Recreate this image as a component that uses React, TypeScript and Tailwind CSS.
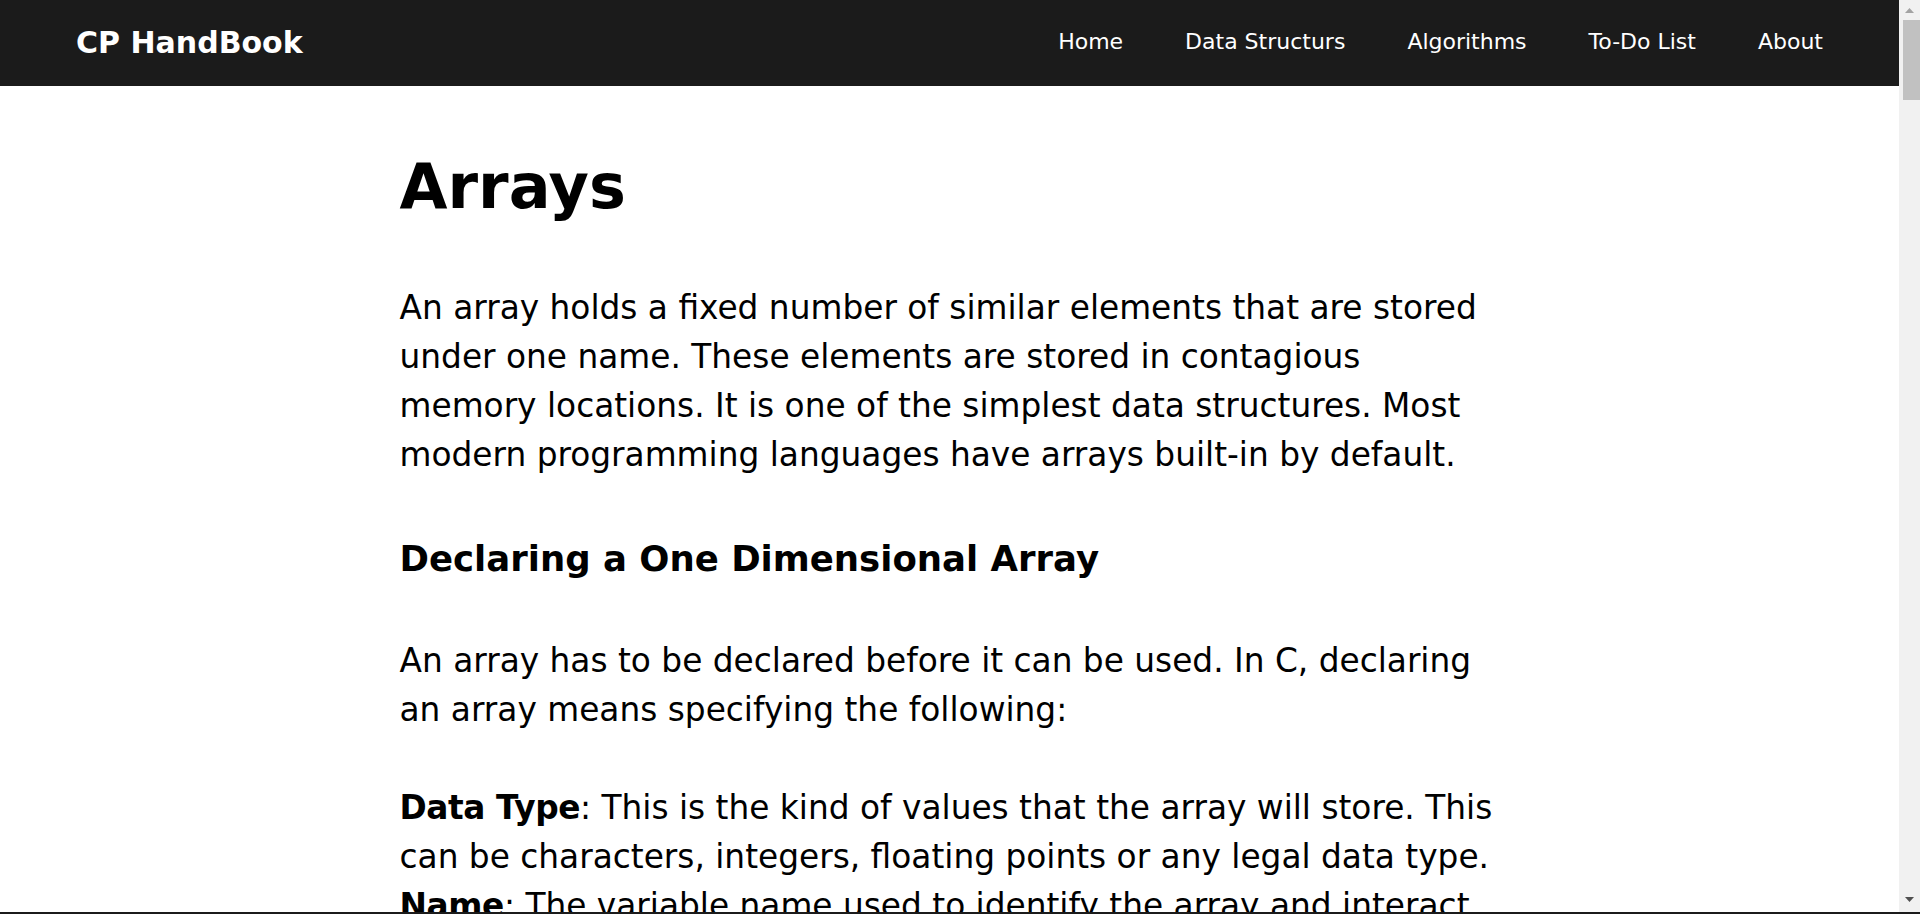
import React from 'react';

const navLinks = ['Home', 'Data Structurs', 'Algorithms', 'To-Do List', 'About'];

const Navbar: React.FC = () => (
  <nav className="h-[86px] shrink-0 bg-[#1b1b1b] flex items-center justify-between px-[76px]">
    <a href="#" className="text-white text-[30px] font-bold leading-none">
      CP HandBook
    </a>
    <ul className="flex items-center gap-[62px]">
      {navLinks.map((link) => (
        <li key={link}>
          <a href="#" className="text-white text-[22px] leading-none">
            {link}
          </a>
        </li>
      ))}
    </ul>
  </nav>
);

const Scrollbar: React.FC = () => (
  <div className="w-[21px] shrink-0 bg-[#f1f1f1] flex flex-col items-center">
    <svg width="9" height="5" viewBox="0 0 9 5" className="mt-[8px]">
      <path d="M4.5 0 L9 5 L0 5 Z" fill="#a3a3a3" />
    </svg>
    <div className="mt-[7px] ml-[3px] w-[17px] h-[80px] bg-[#c1c1c1]" />
    <div className="flex-1" />
    <svg width="9" height="5" viewBox="0 0 9 5" className="mb-[10px]">
      <path d="M0 0 L9 0 L4.5 5 Z" fill="#505050" />
    </svg>
  </div>
);

export default function App() {
  return (
    <div
      className="h-screen flex flex-col overflow-hidden bg-white"
      style={{ fontFamily: '"DejaVu Sans", sans-serif' }}
    >
      <div className="flex-1 flex min-h-0">
        <div className="flex-1 flex flex-col min-w-0 overflow-hidden">
          <Navbar />
          <main className="w-[1100px] mx-auto text-black">
            <h1 className="mt-[64px] text-[62px] leading-[74px] font-bold">Arrays</h1>

            <p className="mt-[60px] text-[32.8px] leading-[49px]">
              An array holds a fixed number of similar elements that are stored under one name. These
              elements are stored in contagious memory locations. It is one of the simplest data
              structures. Most modern programming languages have arrays built-in by default.
            </p>

            <h2 className="mt-[54px] text-[35.5px] leading-[49px] font-bold">
              Declaring a One Dimensional Array
            </h2>

            <p className="mt-[54px] text-[32.8px] leading-[49px]">
              An array has to be declared before it can be used. In C, declaring an array means
              specifying the following:
            </p>

            <div className="mt-[49px] text-[32.8px] leading-[49px]">
              <p>
                <strong className="font-bold tracking-[-0.4px]">Data Type</strong>: This is the kind
                of values that the array will store. This can be characters, integers, floating
                points or any legal data type.
              </p>
              <p>
                <strong className="font-bold tracking-[-0.4px]">Name</strong>: The variable name used
                to identify the array and interact with its data.
              </p>
              <p>
                <strong className="font-bold tracking-[-0.4px]">Size</strong>: The maximum number of
                values that the array can hold.
              </p>
            </div>
          </main>
        </div>
        <Scrollbar />
      </div>
      <div className="h-[2px] shrink-0 bg-[#1b1b1b]" />
    </div>
  );
}
